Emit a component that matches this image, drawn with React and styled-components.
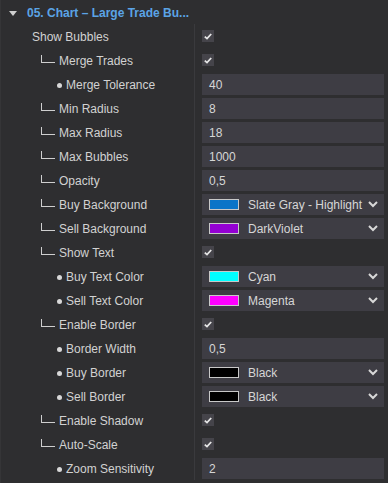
import React from 'react'
import styled, { createGlobalStyle } from 'styled-components'

const GlobalStyle = createGlobalStyle`
  html, body {
    margin: 0;
    padding: 0;
    background: #2e2e30;
  }
  body {
    font-family: "Liberation Sans", Arial, sans-serif;
  }
`

const Panel = styled.div`
  width: 388px;
  height: 483px;
  overflow: hidden;
  box-sizing: border-box;
  border-left: 1px solid #353537;
  background: #2e2e30;
`

const Header = styled.div`
  height: 24px;
  display: flex;
  align-items: center;
  padding: 2px 0 0 8px;
  box-sizing: border-box;
  gap: 10px;
  color: #5ba4e6;
  font-weight: bold;
  font-size: 12px;
  white-space: nowrap;
`

const Caret = styled.span`
  width: 0;
  height: 0;
  border-left: 4px solid transparent;
  border-right: 4px solid transparent;
  border-top: 5px solid #cfcfcf;
`

const Rows = styled.div`
  display: grid;
  grid-template-columns: 194px 1fr;
  grid-auto-rows: 24px;
`

const Label = styled.div`
  display: flex;
  align-items: center;
  border-right: 1px solid #3a3a3d;
  padding-top: 2px;
  padding-left: ${p => (p.$level === 0 ? 31 : p.$level === 1 ? 40 : 56)}px;
  color: #d2d2d2;
  font-size: 12px;
  white-space: nowrap;
`

const Tree = styled.span`
  width: 13px;
  height: 7px;
  border-left: 1px solid #cfcfcf;
  border-bottom: 1px solid #cfcfcf;
  margin-right: 4px;
  margin-top: -5px;
`

const Dot = styled.span`
  width: 5px;
  height: 5px;
  border-radius: 50%;
  background: #d8d8d8;
  margin-right: 4px;
`

const Value = styled.div`
  display: flex;
  align-items: center;
  padding: 0 4px 0 7px;
`

const Field = styled.div`
  flex: 1;
  height: 21px;
  margin-top: 1px;
  background: #3e3d44;
  display: flex;
  align-items: center;
  padding: 1px 6px 0 7px;
  box-sizing: border-box;
  color: #d6d6d6;
  font-size: 12px;
  white-space: nowrap;
`

const Swatch = styled.span`
  width: 28px;
  height: 9px;
  border: 1px solid #c8c8c8;
  background: ${p => p.$color};
  margin: -1px 9px 0 0;
  flex: none;
`

const SelectText = styled.span`
  flex: 1;
  overflow: hidden;
`

const Check = styled.span`
  width: 12px;
  height: 12px;
  background: #45444a;
  display: flex;
  align-items: center;
  justify-content: center;
`

const CheckMark = () => (
  <Check>
    <svg width="8" height="7" viewBox="0 0 8 7">
      <path d="M0.8 3.6 L3 5.6 L7.2 1" fill="none" stroke="#e6e6e6" strokeWidth="1.8" />
    </svg>
  </Check>
)

const Chevron = () => (
  <svg width="10" height="7" viewBox="0 0 10 7" style={{ flex: 'none', marginTop: -1 }}>
    <path d="M1 1 L5 5 L9 1" fill="none" stroke="#d8d8d8" strokeWidth="2" />
  </svg>
)

const rows = [
  { label: 'Show Bubbles', level: 0, check: true },
  { label: 'Merge Trades', level: 1, check: true },
  { label: 'Merge Tolerance', level: 2, value: '40' },
  { label: 'Min Radius', level: 1, value: '8' },
  { label: 'Max Radius', level: 1, value: '18' },
  { label: 'Max Bubbles', level: 1, value: '1000' },
  { label: 'Opacity', level: 1, value: '0,5' },
  { label: 'Buy Background', level: 1, select: 'Slate Gray - Highlight', color: '#0a74c8' },
  { label: 'Sell Background', level: 1, select: 'DarkViolet', color: '#9400d3' },
  { label: 'Show Text', level: 1, check: true },
  { label: 'Buy Text Color', level: 2, select: 'Cyan', color: '#00ffff' },
  { label: 'Sell Text Color', level: 2, select: 'Magenta', color: '#ff00ff' },
  { label: 'Enable Border', level: 1, check: true },
  { label: 'Border Width', level: 2, value: '0,5' },
  { label: 'Buy Border', level: 2, select: 'Black', color: '#000000' },
  { label: 'Sell Border', level: 2, select: 'Black', color: '#000000' },
  { label: 'Enable Shadow', level: 1, check: true },
  { label: 'Auto-Scale', level: 1, check: true },
  { label: 'Zoom Sensitivity', level: 2, value: '2' },
]

export default function App() {
  return (
    <>
      <GlobalStyle />
      <Panel>
        <Header>
          <Caret />
          <span>05. Chart – Large Trade Bu...</span>
        </Header>
        <Rows>
          {rows.map(r => (
            <React.Fragment key={r.label}>
              <Label $level={r.level}>
                {r.level === 1 && <Tree />}
                {r.level === 2 && <Dot />}
                {r.label}
              </Label>
              <Value>
                {r.check && <CheckMark />}
                {r.value && <Field>{r.value}</Field>}
                {r.select && (
                  <Field>
                    <Swatch $color={r.color} />
                    <SelectText>{r.select}</SelectText>
                    <Chevron />
                  </Field>
                )}
              </Value>
            </React.Fragment>
          ))}
        </Rows>
      </Panel>
    </>
  )
}
